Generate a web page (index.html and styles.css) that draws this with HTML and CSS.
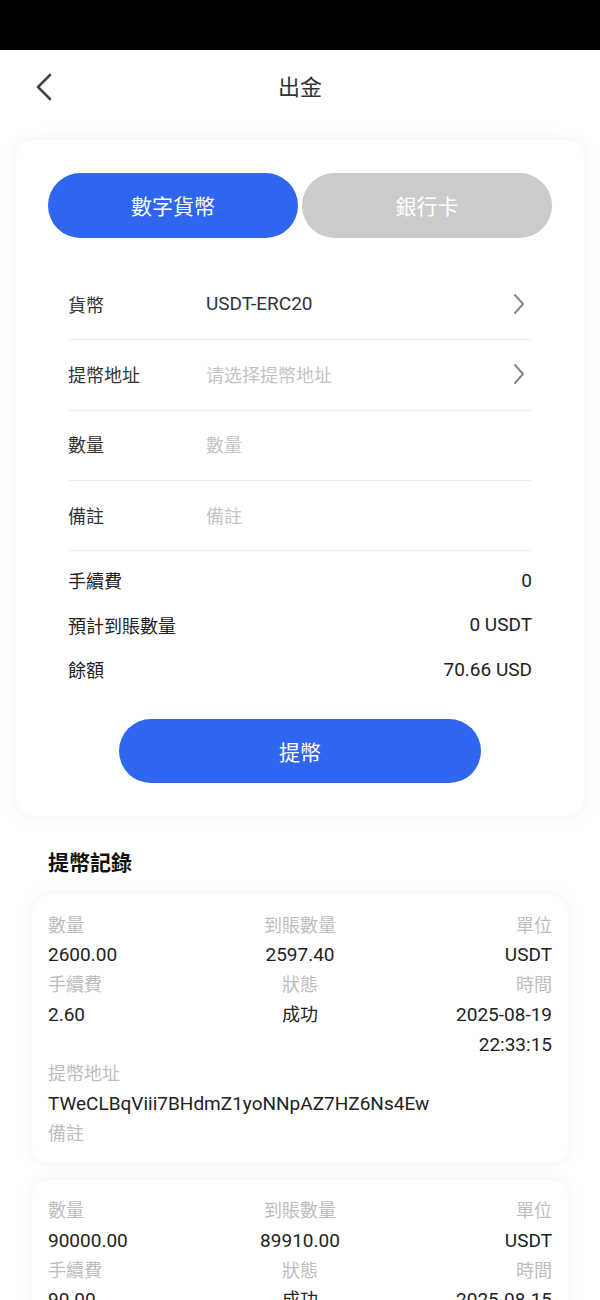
FILE: index.html
```html
<!DOCTYPE html>
<html lang="zh-TW">
<head>
    <meta charset="UTF-8">
    <meta name="viewport" content="width=device-width, initial-scale=1.0">
    <title>出金</title>
    <link rel="stylesheet" href="styles.css">
</head>
<body>
    <div class="statusbar"></div>

    <header class="topbar">
        <span class="back">
            <svg width="20" height="30" viewBox="0 0 20 30">
                <path d="M16 3 L4 15 L16 27" fill="none" stroke="#444" stroke-width="2.6" stroke-linecap="round" stroke-linejoin="round"/>
            </svg>
        </span>
        <h1>出金</h1>
    </header>

    <section class="panel">
        <div class="tabs">
            <button class="tab active">數字貨幣</button>
            <button class="tab">銀行卡</button>
        </div>

        <div class="form">
            <div class="row">
                <span class="label">貨幣</span>
                <span class="value num">USDT-ERC20</span>
                <svg class="arrow" width="14" height="22" viewBox="0 0 14 22">
                    <path d="M3 2 L11 11 L3 20" fill="none" stroke="#888" stroke-width="2" stroke-linecap="round" stroke-linejoin="round"/>
                </svg>
            </div>
            <div class="row">
                <span class="label">提幣地址</span>
                <span class="value hint">请选择提幣地址</span>
                <svg class="arrow" width="14" height="22" viewBox="0 0 14 22">
                    <path d="M3 2 L11 11 L3 20" fill="none" stroke="#888" stroke-width="2" stroke-linecap="round" stroke-linejoin="round"/>
                </svg>
            </div>
            <div class="row">
                <span class="label">數量</span>
                <span class="value hint">數量</span>
            </div>
            <div class="row">
                <span class="label">備註</span>
                <span class="value hint">備註</span>
            </div>
        </div>

        <div class="info">
            <div class="info-row"><span>手續費</span><span class="num">0</span></div>
            <div class="info-row"><span>預計到賬數量</span><span class="num">0 USDT</span></div>
            <div class="info-row"><span>餘額</span><span class="num">70.66 USD</span></div>
        </div>

        <button class="submit">提幣</button>
    </section>

    <h2 class="records-title">提幣記錄</h2>

    <div class="record">
        <span class="k">數量</span><span class="k mid">到賬數量</span><span class="k end">單位</span>
        <span class="v num">2600.00</span><span class="v num mid">2597.40</span><span class="v num end">USDT</span>
        <span class="k">手續費</span><span class="k mid">狀態</span><span class="k end">時間</span>
        <span class="v num">2.60</span><span class="v mid">成功</span><span class="v num end">2025-08-19<br>22:33:15</span>
        <span class="k wide">提幣地址</span>
        <span class="v num wide">TWeCLBqViii7BHdmZ1yoNNpAZ7HZ6Ns4Ew</span>
        <span class="k wide">備註</span>
    </div>

    <div class="record">
        <span class="k">數量</span><span class="k mid">到賬數量</span><span class="k end">單位</span>
        <span class="v num">90000.00</span><span class="v num mid">89910.00</span><span class="v num end">USDT</span>
        <span class="k">手續費</span><span class="k mid">狀態</span><span class="k end">時間</span>
        <span class="v num">90.00</span><span class="v mid">成功</span><span class="v num end">2025-08-15<br>14:02:48</span>
        <span class="k wide">提幣地址</span>
        <span class="v num wide">TWeCLBqViii7BHdmZ1yoNNpAZ7HZ6Ns4Ew</span>
        <span class="k wide">備註</span>
    </div>
</body>
</html>
```

FILE: styles.css
```css
body {
    margin: 0;
    background: #fff;
    font-family: Roboto, "Noto Sans CJK TC", sans-serif;
    color: #222;
}
.statusbar {
    height: 50px;
    background: #000;
}
.topbar {
    height: 75px;
    padding-bottom: 6px;
    box-sizing: border-box;
    display: flex;
    align-items: center;
    justify-content: center;
    position: relative;
}
.topbar h1 {
    margin: 0;
    font-size: 22px;
    font-weight: normal;
    color: #333;
}
.back {
    position: absolute;
    left: 34px;
    top: 22px;
}
.panel {
    margin: 15px 16px 0;
    padding: 33px 32px 33px;
    background: #fff;
    border-radius: 18px;
    box-shadow: 0 0 18px rgba(0, 0, 0, 0.05);
}
.tabs {
    display: flex;
    gap: 4px;
}
.tab {
    flex: 1;
    height: 65px;
    padding-bottom: 3px;
    border: none;
    border-radius: 33px;
    background: #cbcbcb;
    color: #fff;
    font-family: inherit;
    font-size: 21px;
}
.tab.active {
    background: #2f66ef;
}
.form {
    margin: 32px 20px 0;
}
.row {
    height: 70.3px;
    box-sizing: border-box;
    padding-bottom: 2px;
    display: flex;
    align-items: center;
    border-bottom: 1px solid #eee;
    font-size: 18px;
}
.row .label {
    width: 138px;
    color: #333;
}
.row .value {
    flex: 1;
    color: #333;
}
.row .hint {
    color: #c4c4c4;
}
.num {
    font-size: 19px;
}
.arrow {
    margin-right: 6px;
}
.info {
    margin: 7px 20px 0;
}
.info-row {
    height: 44.5px;
    display: flex;
    align-items: center;
    justify-content: space-between;
    font-size: 18px;
    color: #222;
}
.submit {
    display: block;
    width: 362px;
    height: 64px;
    margin: 27px auto 0;
    border: none;
    border-radius: 32px;
    background: #2f66ef;
    color: #fff;
    font-family: inherit;
    font-size: 21px;
}
.records-title {
    margin: 32px 48px 17px;
    font-size: 21px;
    line-height: 30px;
    font-weight: bold;
    color: #111;
}
.record {
    margin: 0 32px 17px;
    padding: 16px 16px 15px;
    background: #fff;
    border-radius: 18px;
    box-shadow: 0 0 16px rgba(0, 0, 0, 0.05);
    display: grid;
    grid-template-columns: 1fr 1fr 1fr;
    font-size: 18px;
    line-height: 29.7px;
}
.record .k {
    color: #bdbdbd;
}
.record .v {
    color: #222;
}
.record .mid {
    text-align: center;
}
.record .end {
    text-align: right;
}
.record .wide {
    grid-column: 1 / -1;
}
```
